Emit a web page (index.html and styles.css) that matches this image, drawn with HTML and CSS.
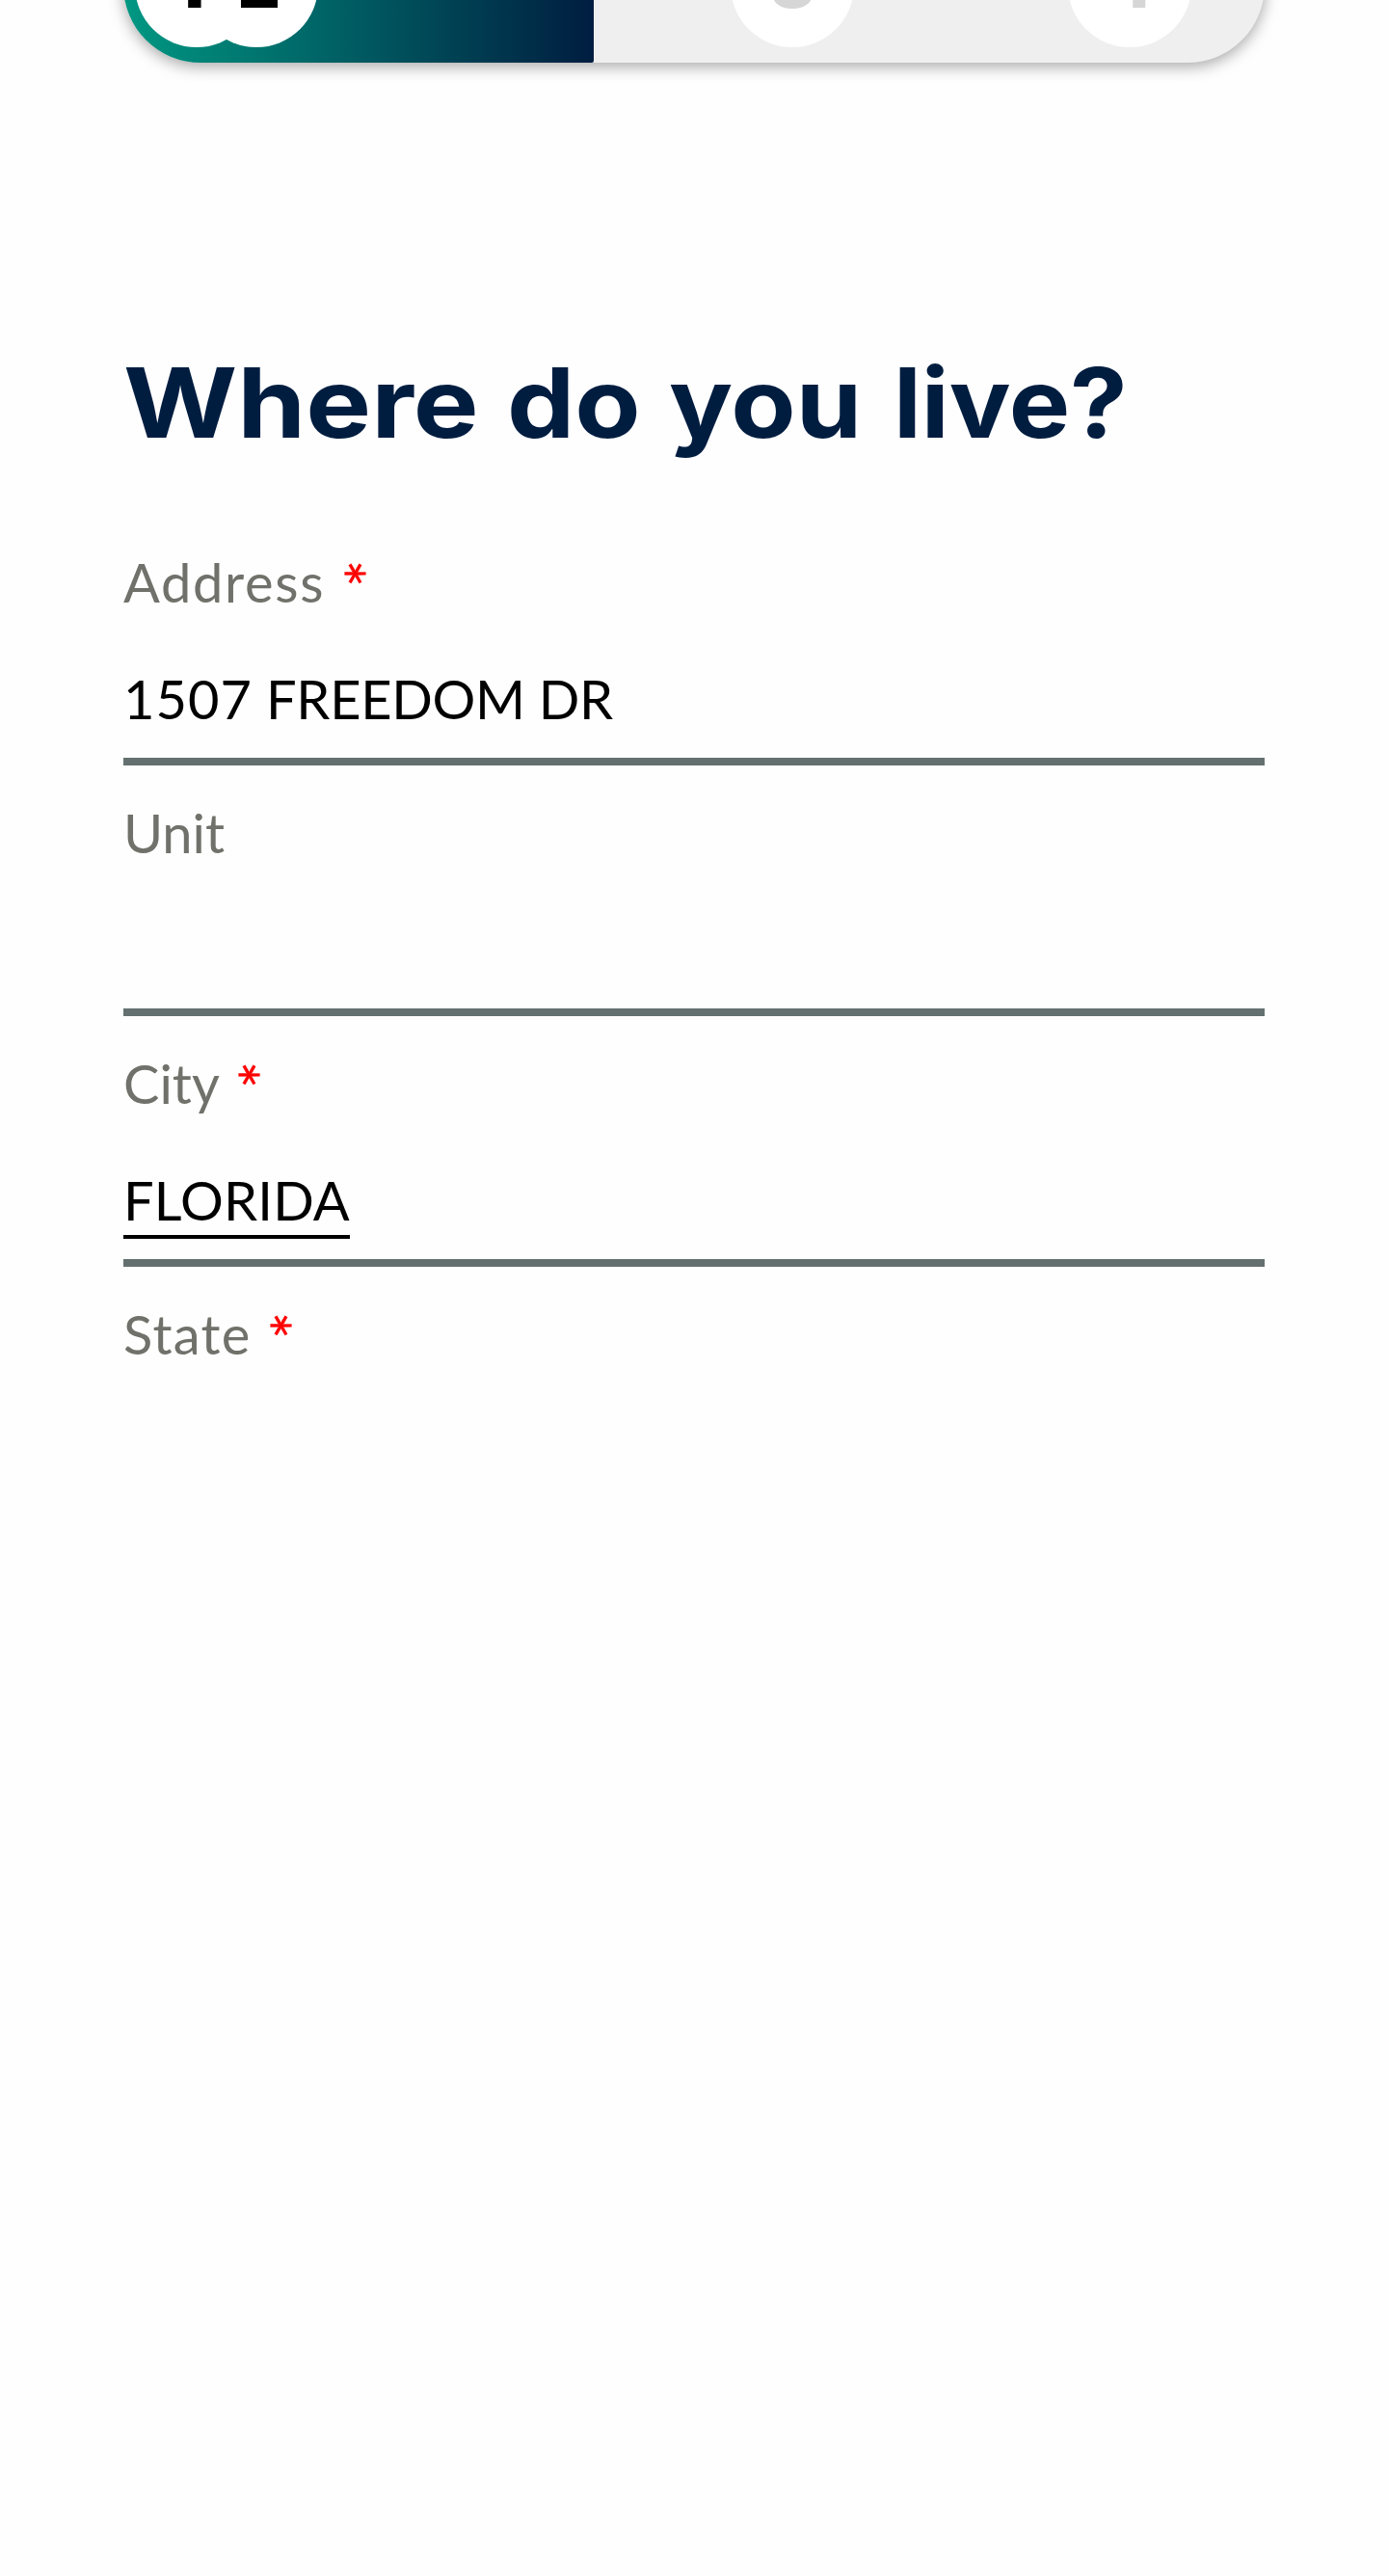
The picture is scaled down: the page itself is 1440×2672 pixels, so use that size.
FILE: index.html
```html
<!DOCTYPE html>
<html lang="en">
<head>
<meta charset="utf-8">
<title>Where do you live?</title>
<link rel="stylesheet" href="styles.css">
</head>
<body>
<main class="page">
  <div class="progress">
    <div class="progress-done">
      <span class="step step-one"><b>1</b></span>
      <span class="step step-two"><b>2</b></span>
    </div>
    <div class="progress-rest">
      <span class="step"><b>3</b></span>
      <span class="step step-four"><b>4</b></span>
    </div>
  </div>
  <h1 class="title"><span class="w-where">Where</span> <span class="w-do">do</span> <span class="w-you">you</span> <span class="w-live">live?</span></h1>
  <form class="fields">
    <div class="field">
      <div class="label"><span class="t-address">Address</span><span class="required">*</span></div>
      <div class="value"><span class="t-number">1507</span><span class="t-street">FREEDOM DR</span></div>
    </div>
    <div class="field">
      <div class="label"><span class="t-unit">Unit</span></div>
      <div class="value"></div>
    </div>
    <div class="field">
      <div class="label"><span class="t-city">City</span><span class="required">*</span></div>
      <div class="value"><span class="t-florida">FLORIDA</span></div>
    </div>
    <div class="field field-last">
      <div class="label"><span class="t-state">State</span><span class="required">*</span></div>
    </div>
  </form>
</main>
</body>
</html>
```
FILE: styles.css
```css
* { box-sizing: border-box; }
body { margin: 0; background: #fefefe; }
.page {
  height: 2672px;
  padding: 0 128px;
  overflow: hidden;
  font-family: Lato, sans-serif;
}
.progress {
  display: flex;
  height: 160px;
  margin-top: -95px;
  border-radius: 80px;
  background: #efefef;
  box-shadow: 0 4px 16px rgba(0, 0, 0, .35);
}
.progress-done {
  display: flex;
  align-items: center;
  width: 488px;
  padding-left: 12px;
  border-radius: 80px 2px 2px 80px;
  background: linear-gradient(90deg, #009882, #001d40);
}
.progress-rest {
  display: flex;
  flex: 1;
  align-items: center;
  justify-content: space-between;
  padding: 0 76px 0 142px;
}
.step {
  width: 128px;
  height: 128px;
  border-radius: 50%;
  background: #fff;
  color: #d6d6d6;
  font: 700 63px/128px Inter, sans-serif;
  text-align: center;
}
.step b { display: block; transform: scaleX(1.08); }
.progress-done .step { color: #000; }
.step-one b { padding-right: 14px; }
.step-two { margin-left: -66px; }
.step-two b { padding-left: 5px; }
.step-four { font: 700 63px/126px "Open Sans", sans-serif; }
.step-four b { padding-left: 5px; }
.title {
  display: flex;
  margin: 290px 0 0;
  height: 126px;
  color: #001d40;
  font: 700 100px/126px Inter, sans-serif;
  white-space: nowrap;
}
.title span { display: block; transform-origin: 0 50%; }
.w-where { width: 398px; transform: scaleX(1.14); }
.w-do { width: 168px; transform: scaleX(1.115); }
.w-you { width: 233px; transform: scaleX(1.1); }
.w-live { transform: scaleX(1.065); }
.fields { padding-top: 88px; }
.field {
  height: 260px;
  padding-top: 35px;
  border-bottom: 8px solid #647070;
}
.field:first-child { height: 225px; padding-top: 0; }
.field-last { border: 0; }
.label, .value {
  display: flex;
  height: 70px;
  font-size: 56px;
  line-height: 70px;
  white-space: nowrap;
  color: #70716a;
}
.value { margin-top: 51px; color: #000; }
.required {
  margin-left: 19px;
  padding-top: 3px;
  color: #f00;
  -webkit-text-stroke: .3px #f00;
  transform: rotate(30deg) scale(1.2);
  transform-origin: 50% 25px;
}
.t-address { width: 210px; letter-spacing: 1.7px; }
.t-city { width: 100px; }
.t-state { width: 133px; letter-spacing: 1.3px; }
.t-number { width: 148px; letter-spacing: 1px; }
.t-street { letter-spacing: -.3px; }
.t-florida { height: 75px; border-bottom: 4px solid #000; letter-spacing: .2px; }
```
